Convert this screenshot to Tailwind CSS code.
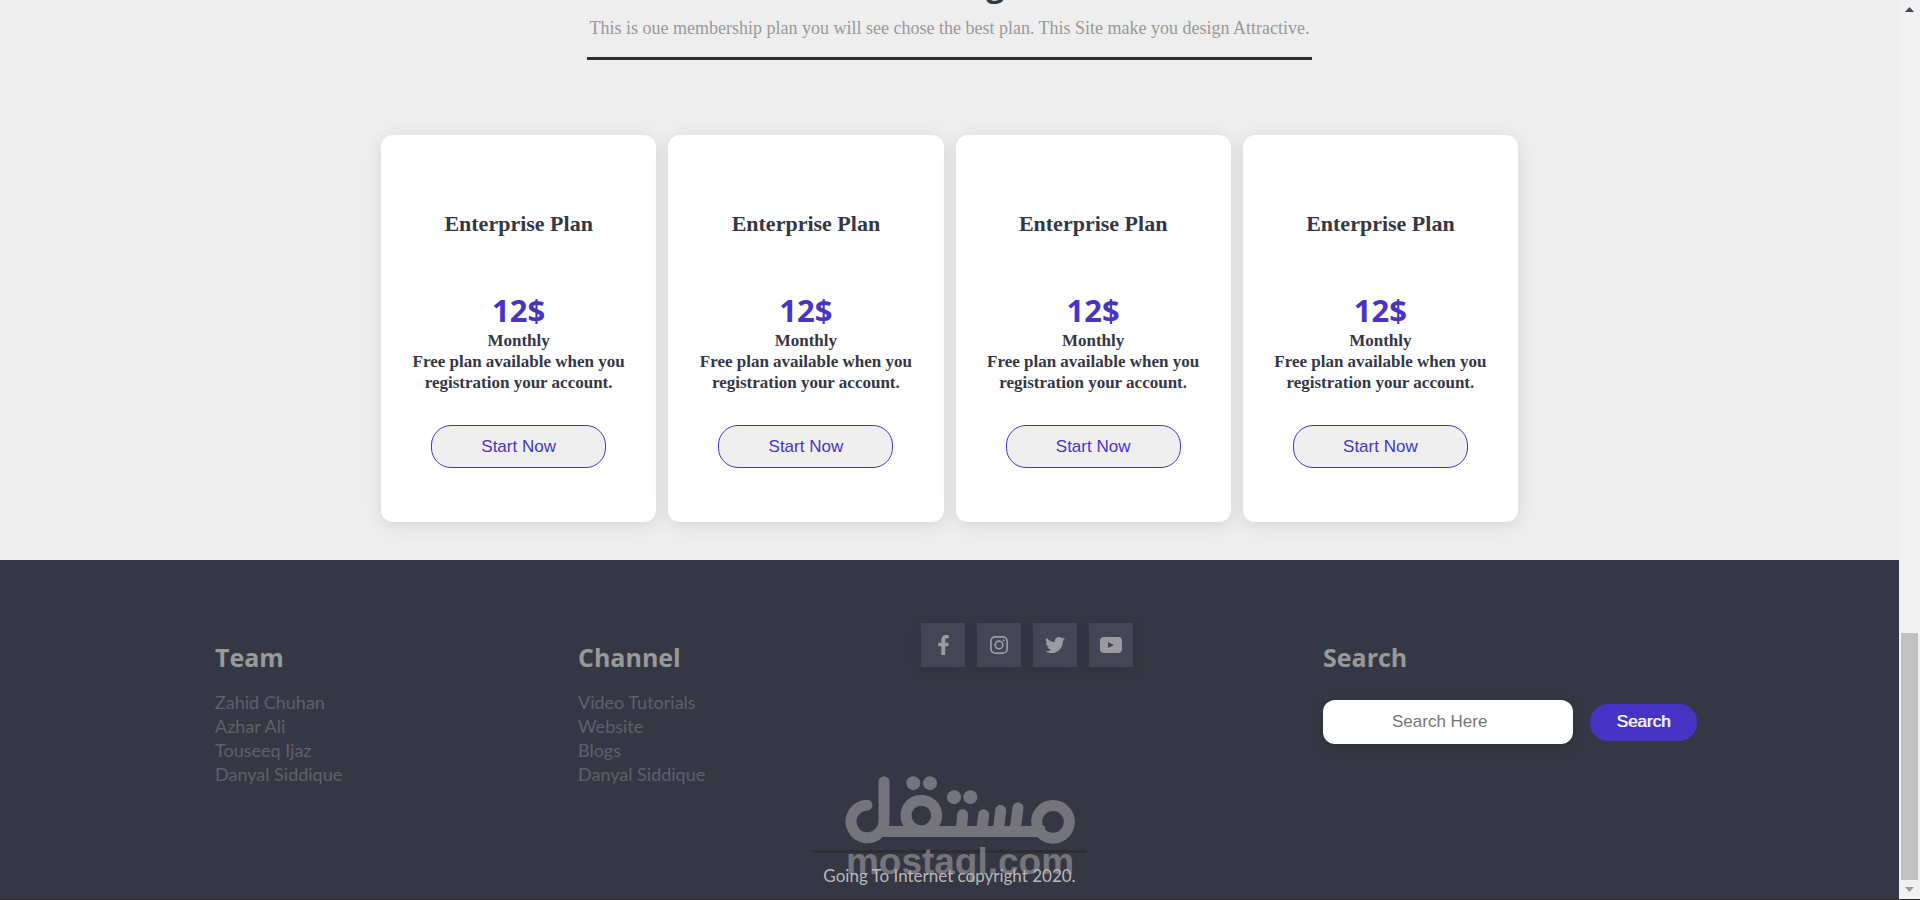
<!DOCTYPE html>
<html lang="en">
<head>
  <meta charset="UTF-8" />
  <meta name="viewport" content="width=device-width, initial-scale=1.0" />
  <title>Pricing</title>
  <script src="https://cdn.jsdelivr.net/npm/@tailwindcss/browser@4"></script>
</head>
<body class="relative flex h-screen overflow-hidden border-b border-[#2e2c33] bg-[#eeeeee]">

  <div class="flex min-w-0 flex-1 flex-col overflow-hidden">
    <!-- Pricing -->
    <main class="-mt-9 flex flex-col items-center pb-[38px] font-['Liberation_Serif',serif]">
      <h2 class="font-['Open_Sans',sans-serif] text-[32px] leading-[40px] font-bold text-[#363744]">Pricing</h2>
      <p class="mt-3 text-[18px] leading-[24px] text-[#999999]">This is oue membership plan you will see chose the best plan. This Site make you design Attractive.</p>
      <hr class="mt-[17px] w-[725px] border-0 border-t-3 border-[#2b2e2e]" />

      <div class="mt-[75px] grid w-full max-w-[1137px] grid-cols-4 gap-3 text-center text-[#363744]">
        <article class="flex flex-col items-center rounded-xl bg-white px-5 pt-[75px] pb-[54px] shadow-[0_3px_18px_rgba(0,0,0,0.1)]">
          <h3 class="text-[22px] leading-[28px] font-bold">Enterprise Plan</h3>
          <strong class="mt-[52px] font-['Open_Sans',sans-serif] text-[31px] leading-[40px] text-[#4834c4]">12$</strong>
          <p class="text-[17px] leading-[21px] font-bold">Monthly<br />Free plan available when you registration your account.</p>
          <button type="button" class="mt-8 h-[43px] w-[175px] rounded-[20px] border border-[#4834c4] bg-[#efefef] font-['Liberation_Sans',sans-serif] text-[17px] text-[#4834c4]">Start Now</button>
        </article>
        <article class="flex flex-col items-center rounded-xl bg-white px-5 pt-[75px] pb-[54px] shadow-[0_3px_18px_rgba(0,0,0,0.1)]">
          <h3 class="text-[22px] leading-[28px] font-bold">Enterprise Plan</h3>
          <strong class="mt-[52px] font-['Open_Sans',sans-serif] text-[31px] leading-[40px] text-[#4834c4]">12$</strong>
          <p class="text-[17px] leading-[21px] font-bold">Monthly<br />Free plan available when you registration your account.</p>
          <button type="button" class="mt-8 h-[43px] w-[175px] rounded-[20px] border border-[#4834c4] bg-[#efefef] font-['Liberation_Sans',sans-serif] text-[17px] text-[#4834c4]">Start Now</button>
        </article>
        <article class="flex flex-col items-center rounded-xl bg-white px-5 pt-[75px] pb-[54px] shadow-[0_3px_18px_rgba(0,0,0,0.1)]">
          <h3 class="text-[22px] leading-[28px] font-bold">Enterprise Plan</h3>
          <strong class="mt-[52px] font-['Open_Sans',sans-serif] text-[31px] leading-[40px] text-[#4834c4]">12$</strong>
          <p class="text-[17px] leading-[21px] font-bold">Monthly<br />Free plan available when you registration your account.</p>
          <button type="button" class="mt-8 h-[43px] w-[175px] rounded-[20px] border border-[#4834c4] bg-[#efefef] font-['Liberation_Sans',sans-serif] text-[17px] text-[#4834c4]">Start Now</button>
        </article>
        <article class="flex flex-col items-center rounded-xl bg-white px-5 pt-[75px] pb-[54px] shadow-[0_3px_18px_rgba(0,0,0,0.1)]">
          <h3 class="text-[22px] leading-[28px] font-bold">Enterprise Plan</h3>
          <strong class="mt-[52px] font-['Open_Sans',sans-serif] text-[31px] leading-[40px] text-[#4834c4]">12$</strong>
          <p class="text-[17px] leading-[21px] font-bold">Monthly<br />Free plan available when you registration your account.</p>
          <button type="button" class="mt-8 h-[43px] w-[175px] rounded-[20px] border border-[#4834c4] bg-[#efefef] font-['Liberation_Sans',sans-serif] text-[17px] text-[#4834c4]">Start Now</button>
        </article>
      </div>
    </main>

    <!-- Footer -->
    <footer class="flex-1 bg-[#363744] pt-[63px] font-['Lato',sans-serif]">
      <div class="grid grid-cols-[363fr_343fr_402fr_374fr] pr-[202px] pl-[215px]">
        <nav class="pt-[18px]" aria-labelledby="team">
          <h3 id="team" class="font-['Open_Sans',sans-serif] text-[25px] leading-[32px] font-bold text-[#999999]">Team</h3>
          <ul class="mt-[17px] text-[18px] leading-[24px] text-[#5f606b]">
            <li><a href="#">Zahid Chuhan</a></li>
            <li><a href="#">Azhar Ali</a></li>
            <li><a href="#">Touseeq Ijaz</a></li>
            <li><a href="#">Danyal Siddique</a></li>
          </ul>
        </nav>

        <nav class="pt-[18px]" aria-labelledby="channel">
          <h3 id="channel" class="font-['Open_Sans',sans-serif] text-[25px] leading-[32px] font-bold text-[#999999]">Channel</h3>
          <ul class="mt-[17px] text-[18px] leading-[24px] text-[#5f606b]">
            <li><a href="#">Video Tutorials</a></li>
            <li><a href="#">Website</a></li>
            <li><a href="#">Blogs</a></li>
            <li><a href="#">Danyal Siddique</a></li>
          </ul>
        </nav>

        <div class="flex items-start gap-3 text-[#9b9a9f]">
          <a href="#" aria-label="Facebook" class="flex size-11 items-center justify-center bg-[#444555] shadow-[0_3px_12px_rgba(0,0,0,0.1)]">
            <svg class="h-5 w-[13px]" viewBox="0 0 320 512" fill="currentColor"><path d="M279.14 288l14.22-92.66h-88.91v-60.13c0-25.35 12.42-50.06 52.24-50.06h40.42V6.26S260.43 0 225.36 0c-73.22 0-121.08 44.38-121.08 124.72v70.62H22.89V288h81.39v224h100.17V288z" /></svg>
          </a>
          <a href="#" aria-label="Instagram" class="flex size-11 items-center justify-center bg-[#444555] shadow-[0_3px_12px_rgba(0,0,0,0.1)]">
            <svg class="size-[18px]" viewBox="0 0 18 18" fill="none" stroke="currentColor" stroke-width="1.7"><rect x="0.9" y="0.9" width="16.2" height="16.2" rx="4.2" /><circle cx="9" cy="9" r="3.8" /><circle cx="13.7" cy="4.3" r="1.1" fill="currentColor" stroke="none" /></svg>
          </a>
          <a href="#" aria-label="Twitter" class="flex size-11 items-center justify-center bg-[#444555] shadow-[0_3px_12px_rgba(0,0,0,0.1)]">
            <svg class="size-5" viewBox="0 0 512 512" fill="currentColor"><path d="M459.37 151.716c.325 4.548.325 9.097.325 13.645 0 138.72-105.583 298.558-298.558 298.558-59.452 0-114.68-17.219-161.137-47.106 8.447.974 16.568 1.299 25.34 1.299 49.055 0 94.213-16.568 130.274-44.832-46.132-.975-84.792-31.188-98.112-72.772 6.498.974 12.995 1.624 19.818 1.624 9.421 0 18.843-1.3 27.614-3.573-48.081-9.747-84.143-51.98-84.143-102.985v-1.299c13.969 7.797 30.214 12.67 47.431 13.319-28.264-18.843-46.781-51.005-46.781-87.391 0-19.492 5.197-37.36 14.294-52.954 51.655 63.675 129.3 105.258 216.365 109.807-1.624-7.797-2.599-15.918-2.599-24.04 0-57.828 46.782-104.934 104.934-104.934 30.213 0 57.502 12.67 76.67 33.137 23.715-4.548 46.456-13.32 66.599-25.34-7.798 24.366-24.366 44.833-46.132 57.827 21.117-2.273 41.584-8.122 60.426-16.243-14.292 20.791-32.161 39.308-52.628 54.253z" /></svg>
          </a>
          <a href="#" aria-label="YouTube" class="flex size-11 items-center justify-center bg-[#444555] shadow-[0_3px_12px_rgba(0,0,0,0.1)]">
            <svg class="h-4 w-[22px]" viewBox="0 0 22 16" fill="currentColor" fill-rule="evenodd"><path d="M4 0H18Q22 0 22 4V12Q22 16 18 16H4Q0 16 0 12V4Q0 0 4 0ZM8 5V11L14 8Z" /></svg>
          </a>
        </div>

        <form class="pt-[18px]">
          <h3 class="font-['Open_Sans',sans-serif] text-[25px] leading-[32px] font-bold text-[#999999]"><label for="search">Search</label></h3>
          <div class="mt-[27px] flex items-center justify-between font-['Liberation_Sans',sans-serif] text-[17px]">
            <input id="search" type="text" placeholder="Search Here" class="h-11 w-[250px] rounded-xl bg-white pl-[69px] text-[#363744] shadow-[0_3px_12px_rgba(0,0,0,0.15)] placeholder:text-[#757575]" />
            <button type="button" class="h-[37px] w-[107px] rounded-[18px] bg-[#4834c4] text-white text-shadow-[1px_0_0_rgba(255,255,255,0.6)]">Search</button>
          </div>
        </form>
      </div>

      <hr class="mx-auto mt-16 w-[275px] border-0 border-t-3 border-[#2e2e30]" />
      <p class="relative z-20 mt-[11px] text-center text-[17px] leading-[24px] text-[#b9b9bb]">Going To Internet copyright 2020.</p>
    </footer>
  </div>

  <!-- Scrollbar -->
  <div class="flex w-[21px] flex-col items-center bg-[#f1f1f1] pt-[7px] pb-[7px]" aria-hidden="true">
    <svg class="h-[5px] w-[9px]" viewBox="0 0 18 10" fill="#444555"><path d="M0 10 9 0 18 10z" /></svg>
    <div class="mt-auto mb-[7px] h-[247px] w-[17px] bg-[#c1c1c1]"></div>
    <svg class="h-[5px] w-[9px]" viewBox="0 0 18 10" fill="#999999"><path d="M0 0H18L9 10z" /></svg>
  </div>

  <!-- Watermark -->
  <div class="pointer-events-none absolute bottom-5 left-1/2 z-10 flex -translate-x-1/2 flex-col items-center text-[#b4b2b4] opacity-50">
    <svg class="h-[68px] w-[230px]" viewBox="165 78 690 203" fill="none" stroke="currentColor" stroke-width="33" role="img" aria-label="مستقل">
      <path stroke-linecap="round" d="M231 165A49 49 0 1 0 270 245Q282 233 282 212V95" />
      <path d="M272 244H765" />
      <circle cx="394" cy="196" r="46" />
      <path stroke-linecap="round" d="M518 194 513 244M581 194 575 244M632 181 625 244M684 173 675 244" />
      <circle cx="789" cy="215" r="49" />
      <g fill="currentColor" stroke="none">
        <circle cx="370" cy="99" r="21" />
        <circle cx="420" cy="99" r="21" />
        <circle cx="492" cy="141" r="21" />
        <circle cx="541" cy="141" r="21" />
      </g>
    </svg>
    <span class="font-['Liberation_Sans',sans-serif] text-[37px] leading-[35px] font-bold">mostaql.com</span>
  </div>

  <!-- Highlight on the bottom edge -->
  <div class="absolute -bottom-px left-[430px] h-px w-[61px] bg-[#4a4860]"></div>
</body>
</html>
